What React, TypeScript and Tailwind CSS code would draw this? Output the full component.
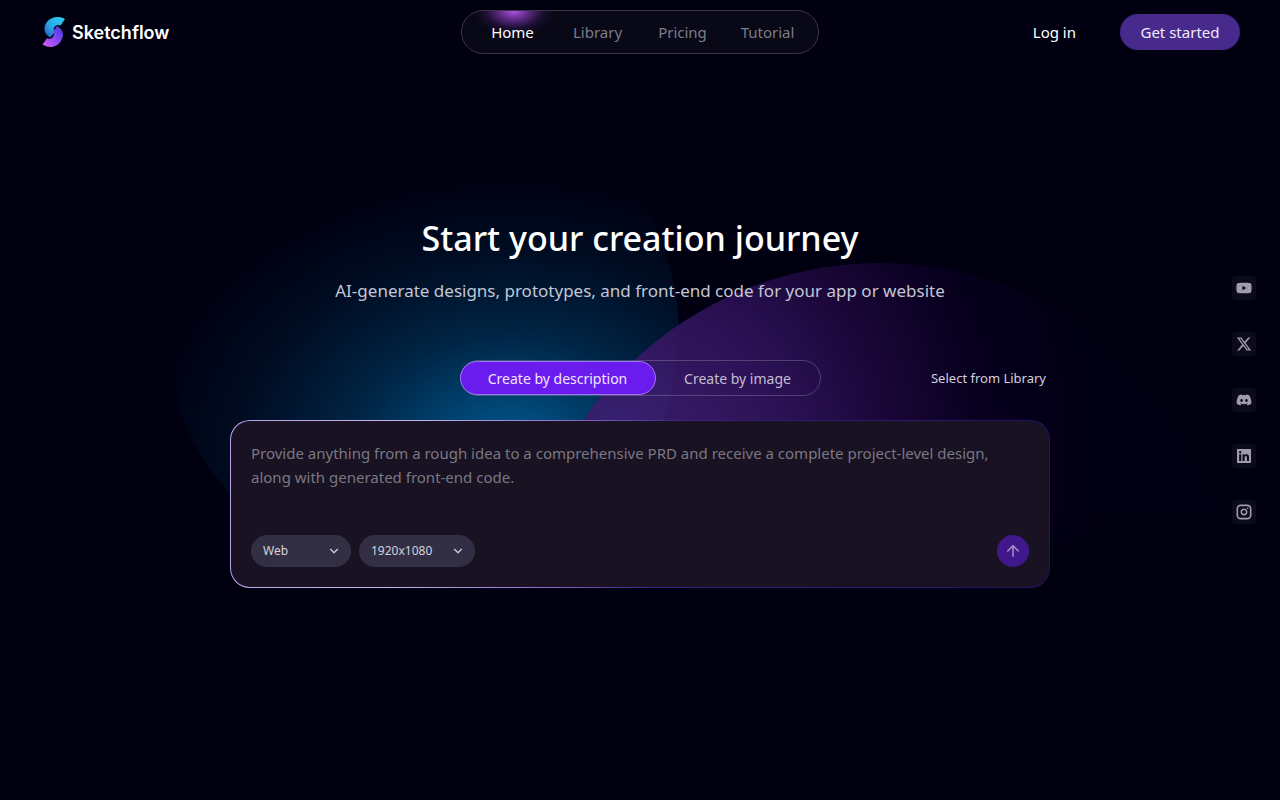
import { useState } from "react";
import { ArrowUp, ChevronDown, Instagram } from "lucide-react";
import { FaDiscord, FaLinkedin, FaXTwitter, FaYoutube } from "react-icons/fa6";

const NAV = ["Home", "Library", "Pricing", "Tutorial"];

const SOCIALS = [
  { name: "YouTube", icon: <FaYoutube className="size-4" /> },
  { name: "X", icon: <FaXTwitter className="size-4" /> },
  { name: "Discord", icon: <FaDiscord className="size-4" /> },
  { name: "LinkedIn", icon: <FaLinkedin className="size-4" /> },
  { name: "Instagram", icon: <Instagram className="size-4" strokeWidth={2.4} /> },
];

function Logo() {
  return (
    <a href="#" className="flex items-center gap-1.5">
      <svg viewBox="0 0 26 32" className="h-8 w-[26px]" aria-hidden="true">
        <defs>
          <linearGradient id="logoTop" x1="1" y1="0" x2="0" y2="1">
            <stop offset="0" stopColor="#2fd0f2" />
            <stop offset="0.6" stopColor="#28a4ea" />
            <stop offset="1" stopColor="#2450b4" />
          </linearGradient>
          <linearGradient id="logoBottom" x1="1" y1="0" x2="0" y2="1">
            <stop offset="0" stopColor="#4038d8" />
            <stop offset="0.5" stopColor="#8a48f6" />
            <stop offset="1" stopColor="#e05cf0" />
          </linearGradient>
        </defs>
        <path
          d="M25 3 20.500 9.500C18.500 8.500 16.500 9 15 10.400 13.200 12.200 13.500 14 14.500 16L10.500 21.500C6.500 19.500 4.300 16.500 4.500 12.500 5 6 10.500 1 17 1 20 1 22.500 1.500 25 3Z"
          fill="url(#logoTop)"
        />
        <path
          d="M2.500 28.500 7 22.200C9 23.200 11 22.900 12.500 21.400 14.300 19.600 14 17.500 13 15.500L17 10C20.800 12 23.200 15 23 19 22.500 25.500 17 31 10.500 31 7.500 31 5 30 2.500 28.500Z"
          fill="url(#logoBottom)"
        />
      </svg>
      <span className="font-[Inter,sans-serif] text-[18px] font-semibold text-white">Sketchflow</span>
    </a>
  );
}

function Header() {
  return (
    <header className="relative grid h-16 grid-cols-[1fr_auto_1fr] items-center px-10">
      <Logo />
      <nav className="relative flex h-11 items-center overflow-hidden rounded-full border border-[#3a3848] bg-[#090817] px-2">
        <span
          className="absolute -top-6 left-3 h-12 w-20 bg-[radial-gradient(closest-side,#b052e0,#8a3cbcb0_35%,#5a248840_70%,transparent)]"
          aria-hidden="true"
        />
        {NAV.map((item, i) => (
          <a
            key={item}
            href="#"
            className={`relative w-[85px] text-center text-[15px] ${i === 0 ? "text-white" : "text-[#7d7c88]"}`}
          >
            {item}
          </a>
        ))}
      </nav>
      <div className="flex items-center justify-end gap-11 text-[15px]">
        <a href="#" className="text-white">
          Log in
        </a>
        <button type="button" className="h-9 w-30 rounded-full bg-[#482a8c] text-[#f0eaff]">
          Get started
        </button>
      </div>
    </header>
  );
}

// Two soft coloured discs behind the prompt card
function Glow() {
  return (
    <svg
      viewBox="0 0 1280 800"
      className="pointer-events-none absolute top-0 left-1/2 h-[800px] w-[1280px] -translate-x-1/2"
      aria-hidden="true"
    >
      <defs>
        <radialGradient
          id="blue"
          gradientUnits="userSpaceOnUse"
          cx="0"
          cy="0"
          r="1"
          gradientTransform="translate(510 455) scale(375 285)"
        >
          <stop offset="0" stopColor="#005a90" />
          <stop offset="0.15" stopColor="#004a7a" />
          <stop offset="0.43" stopColor="#002444" />
          <stop offset="0.72" stopColor="#000c22" />
          <stop offset="1" stopColor="#000010" />
        </radialGradient>
        <radialGradient id="purple" gradientUnits="userSpaceOnUse" cx="640" cy="450" r="470">
          <stop offset="0" stopColor="#401f78" stopOpacity="0.85" />
          <stop offset="0.15" stopColor="#3c1b6c" stopOpacity="0.88" />
          <stop offset="0.35" stopColor="#2a1054" stopOpacity="0.96" />
          <stop offset="0.54" stopColor="#190636" />
          <stop offset="0.74" stopColor="#07001e" />
          <stop offset="1" stopColor="#010012" />
        </radialGradient>
        <linearGradient id="fade" x1="0" y1="0" x2="0" y2="1">
          <stop offset="0.8" stopColor="#fff" />
          <stop offset="1" stopColor="#000" />
        </linearGradient>
        <mask id="discMask" maskUnits="userSpaceOnUse" x="500" y="240" width="780" height="340">
          <rect x="500" y="240" width="780" height="340" fill="url(#fade)" />
        </mask>
      </defs>
      <path
        d="M270 540C205 470 175 425 175 375 178 300 240 250 330 205 400 175 560 160 625 180 655 205 679 280 679 330 679 380 660 430 640 500Z"
        fill="url(#blue)"
      />
      <circle cx="880" cy="622" r="359" fill="url(#purple)" mask="url(#discMask)" />
    </svg>
  );
}

function Picker({ label, options, width }: { label: string; options: string[]; width: string }) {
  return (
    <div className={`relative ${width}`}>
      <select
        aria-label={label}
        className="block h-8 w-full appearance-none rounded-full bg-[#322e43] pr-7 pl-3 text-[12px] text-[#d4d2dc] outline-none"
      >
        {options.map((o) => (
          <option key={o}>{o}</option>
        ))}
      </select>
      <ChevronDown className="pointer-events-none absolute top-[9px] right-[10px] size-3.5 text-[#d4d2dc]" />
    </div>
  );
}

function PromptCard() {
  const [prompt, setPrompt] = useState("");

  return (
    <form
      onSubmit={(e) => e.preventDefault()}
      className="mt-6 rounded-[20px] bg-[linear-gradient(100deg,#b9a0ea_0%,#c4b6ee_22%,#8c6cc8_40%,#35207c_54%,#22145c_100%)] p-px"
    >
      <div className="rounded-[19px] bg-[#181222] p-5">
        <textarea
          aria-label="Describe your idea"
          value={prompt}
          onChange={(e) => setPrompt(e.target.value)}
          placeholder="Provide anything from a rough idea to a comprehensive PRD and receive a complete project-level design, along with generated front-end code."
          className="block h-[94px] w-full resize-none text-[15px] leading-6 text-white outline-none placeholder:text-[#7b7783]"
        />
        <div className="flex items-center gap-2">
          <Picker label="Platform" options={["Web", "Mobile"]} width="w-[100px]" />
          <Picker label="Resolution" options={["1920x1080", "1440x900"]} width="w-[116px]" />
          <button
            type="submit"
            aria-label="Generate"
            className="ml-auto flex size-8 items-center justify-center rounded-full bg-[#41178c] text-[#a797c4]"
          >
            <ArrowUp className="size-[18px]" />
          </button>
        </div>
      </div>
    </form>
  );
}

export default function App() {
  const [mode, setMode] = useState("description");

  const tab = (value: string) =>
    mode === value ? "border-[#a074f4] bg-[#6a1bee] text-[#f0e8ff]" : "border-transparent text-[#c5bdd2]";

  return (
    <div className="relative min-h-screen overflow-hidden bg-[#000010] font-['Noto_Sans',sans-serif] text-white">
      <Glow />
      <Header />
      <main className="relative mx-auto max-w-[820px] pt-[150px]">
        <h1 className="text-center text-[34px] leading-[48px] font-medium">Start your creation journey</h1>
        <p className="mt-[17px] text-center text-[17px] leading-6 text-[#c3c6d4]">
          AI-generate designs, prototypes, and front-end code for your app or website
        </p>

        <div className="mt-[57px] grid grid-cols-[1fr_auto_1fr] items-center">
          <div className="col-start-2 flex h-9 items-center rounded-full border border-[#ffffff33] text-[14px]">
            <button
              type="button"
              onClick={() => setMode("description")}
              className={`-ml-px h-[34px] w-[196px] rounded-full border ${tab("description")}`}
            >
              Create by description
            </button>
            <button
              type="button"
              onClick={() => setMode("image")}
              className={`h-[34px] w-[164px] rounded-full border ${tab("image")}`}
            >
              Create by image
            </button>
          </div>
          <a href="#" className="justify-self-end pr-1 text-[13px] leading-5 text-[#d2d0da]">
            Select from Library
          </a>
        </div>

        <PromptCard />
      </main>

      <aside className="fixed top-1/2 right-6 flex -translate-y-1/2 flex-col gap-8">
        {SOCIALS.map(({ name, icon }) => (
          <a
            key={name}
            href="#"
            aria-label={name}
            className="flex size-6 items-center justify-center rounded bg-[#0c0b1a] text-[#9f9dac]"
          >
            {icon}
          </a>
        ))}
      </aside>
    </div>
  );
}
